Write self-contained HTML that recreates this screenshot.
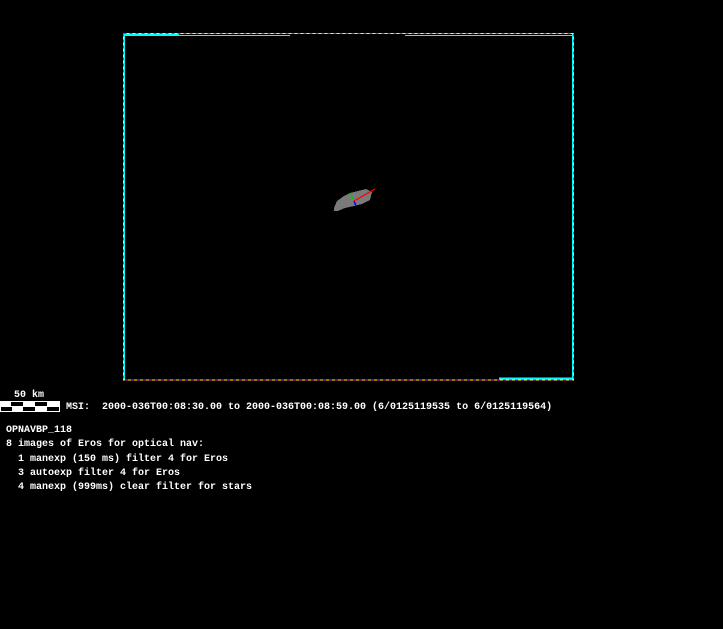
<!DOCTYPE html>
<html><head><style>
html,body{margin:0;padding:0;background:#000;width:723px;height:629px;overflow:hidden}
.t{position:absolute;color:#fff;font-family:"Liberation Mono","DejaVu Sans Mono",monospace;font-size:10px;line-height:14.3px;white-space:pre;letter-spacing:0;font-weight:bold}
</style></head><body>
<svg width="723" height="629" style="position:absolute;left:0;top:0" shape-rendering="crispEdges">
<line x1="123" y1="34.5" x2="179" y2="34.5" stroke="#0ff" stroke-width="2"/>
<line x1="123" y1="35.5" x2="290" y2="35.5" stroke="#0ff"/>
<line x1="405" y1="35.5" x2="573" y2="35.5" stroke="#0ff"/>
<line x1="499" y1="378.5" x2="573" y2="378.5" stroke="#0ff" stroke-width="2"/>
<line x1="124.5" y1="34" x2="124.5" y2="380" stroke="#0ff"/>
<line x1="572.5" y1="33" x2="572.5" y2="380" stroke="#0ff"/>
<rect x="123.5" y="33.5" width="450" height="346.5" fill="none" stroke="#ff0" stroke-width="1"/>
<rect x="123.5" y="33.5" width="450" height="346.5" fill="none" stroke="#f0f" stroke-width="1" stroke-dasharray="3,3"/>
<polygon points="334,208 337,201 344,196 350,193 358,191 366,189 372,192 370,200 362,204 354,206 345,208 338,211 334,211" fill="#7a7a7a"/>
<line x1="350" y1="193" x2="354" y2="201" stroke="#0c0" stroke-width="1.5"/>
<line x1="354" y1="201" x2="356" y2="206" stroke="#00f" stroke-width="1.5"/>
<line x1="354" y1="201" x2="375" y2="189" stroke="#f00" stroke-width="1.2"/>
<rect x="0" y="401" width="60" height="11" fill="#fff"/>
<rect x="11" y="402" width="12" height="4" fill="#000"/>
<rect x="35" y="402" width="12" height="4" fill="#000"/>
<rect x="1" y="407" width="11" height="4" fill="#000"/>
<rect x="23" y="407" width="12" height="4" fill="#000"/>
<rect x="47" y="407" width="12" height="4" fill="#000"/>
</svg>
<div class="t" style="left:14px;top:389px">50 km</div>
<div class="t" style="left:66px;top:401px">MSI:  2000-036T00:08:30.00 to 2000-036T00:08:59.00 (6/0125119535 to 6/0125119564)</div>
<div class="t" style="left:6px;top:424px">OPNAVBP_118
8 images of Eros for optical nav:
  1 manexp (150 ms) filter 4 for Eros
  3 autoexp filter 4 for Eros
  4 manexp (999ms) clear filter for stars</div>
</body></html>
